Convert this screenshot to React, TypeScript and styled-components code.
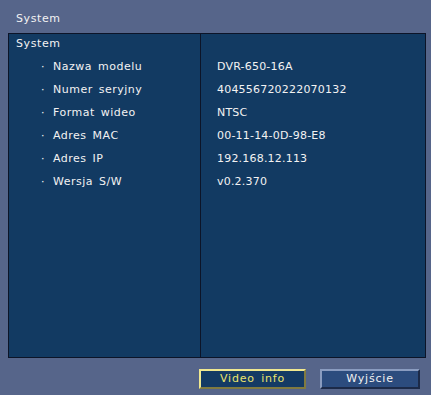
import React from 'react';
import styled, { createGlobalStyle } from 'styled-components';

const GlobalStyle = createGlobalStyle`
  html, body {
    margin: 0;
    padding: 0;
    background: #56658a;
  }
  body {
    font-family: 'DejaVu Sans', 'Liberation Sans', sans-serif;
    font-size: 11px;
    color: #f2f2f2;
  }
`;

const rows = [
  { label: 'Nazwa modelu', value: 'DVR-650-16A' },
  { label: 'Numer seryjny', value: '404556720222070132' },
  { label: 'Format wideo', value: 'NTSC' },
  { label: 'Adres MAC', value: '00-11-14-0D-98-E8' },
  { label: 'Adres IP', value: '192.168.12.113' },
  { label: 'Wersja S/W', value: 'v0.2.370' },
];

const App: React.FC = () => {
  return (
    <Screen>
      <GlobalStyle />
      <Title>System</Title>
      <Panel>
        <LabelColumn>
          <Section>System</Section>
          {rows.map(r => (
            <LabelRow key={r.label}>
              <Bullet>·</Bullet>
              <span>{r.label}</span>
            </LabelRow>
          ))}
        </LabelColumn>
        <ValueColumn>
          <Section />
          {rows.map(r => (
            <ValueRow key={r.label}>{r.value}</ValueRow>
          ))}
        </ValueColumn>
      </Panel>
      <ButtonBar>
        <Button active>Video info</Button>
        <Button>Wyjście</Button>
      </ButtonBar>
    </Screen>
  );
};

const Screen = styled.div`
  width: 431px;
  height: 395px;
  box-sizing: border-box;
  padding: 0 5px 0 8px;
  display: flex;
  flex-direction: column;
`;

const Title = styled.div`
  height: 33px;
  line-height: 37px;
  padding-left: 8px;
  letter-spacing: 0.6px;
`;

const Panel = styled.div`
  height: 325px;
  box-sizing: border-box;
  border: 1px solid #0c1428;
  background: #123a62;
  display: grid;
  grid-template-columns: 192px 1fr;
`;

const LabelColumn = styled.div`
  border-right: 1px solid #0c1428;
  display: flex;
  flex-direction: column;
`;

const ValueColumn = styled.div`
  display: flex;
  flex-direction: column;
`;

const Section = styled.div`
  height: 21px;
  line-height: 20px;
  padding-left: 7px;
  letter-spacing: 0.6px;
`;

const LabelRow = styled.div`
  height: 23px;
  line-height: 23px;
  padding-left: 32px;
  display: flex;
  letter-spacing: 0.5px;
  word-spacing: 2px;
`;

const Bullet = styled.span`
  width: 12px;
`;

const ValueRow = styled.div`
  height: 23px;
  line-height: 23px;
  padding-left: 16px;
  letter-spacing: 0.2px;
`;

const ButtonBar = styled.div`
  display: flex;
  justify-content: flex-end;
  gap: 14px;
  padding: 11px 6px 0 0;
`;

const Button = styled.div<{ active?: boolean }>`
  box-sizing: border-box;
  width: ${p => (p.active ? 107 : 100)}px;
  height: 20px;
  line-height: 16px;
  text-align: center;
  letter-spacing: 0.8px;
  word-spacing: 2px;
  border: 2px solid;
  border-color: ${p =>
    p.active ? '#f0e890 #807a40 #807a40 #f0e890' : '#8a9cc0 #1c2a48 #1c2a48 #8a9cc0'};
  background: ${p => (p.active ? '#143a64' : '#2c4c7e')};
  color: ${p => (p.active ? '#ece46c' : '#f2f2f2')};
`;

export default App;
